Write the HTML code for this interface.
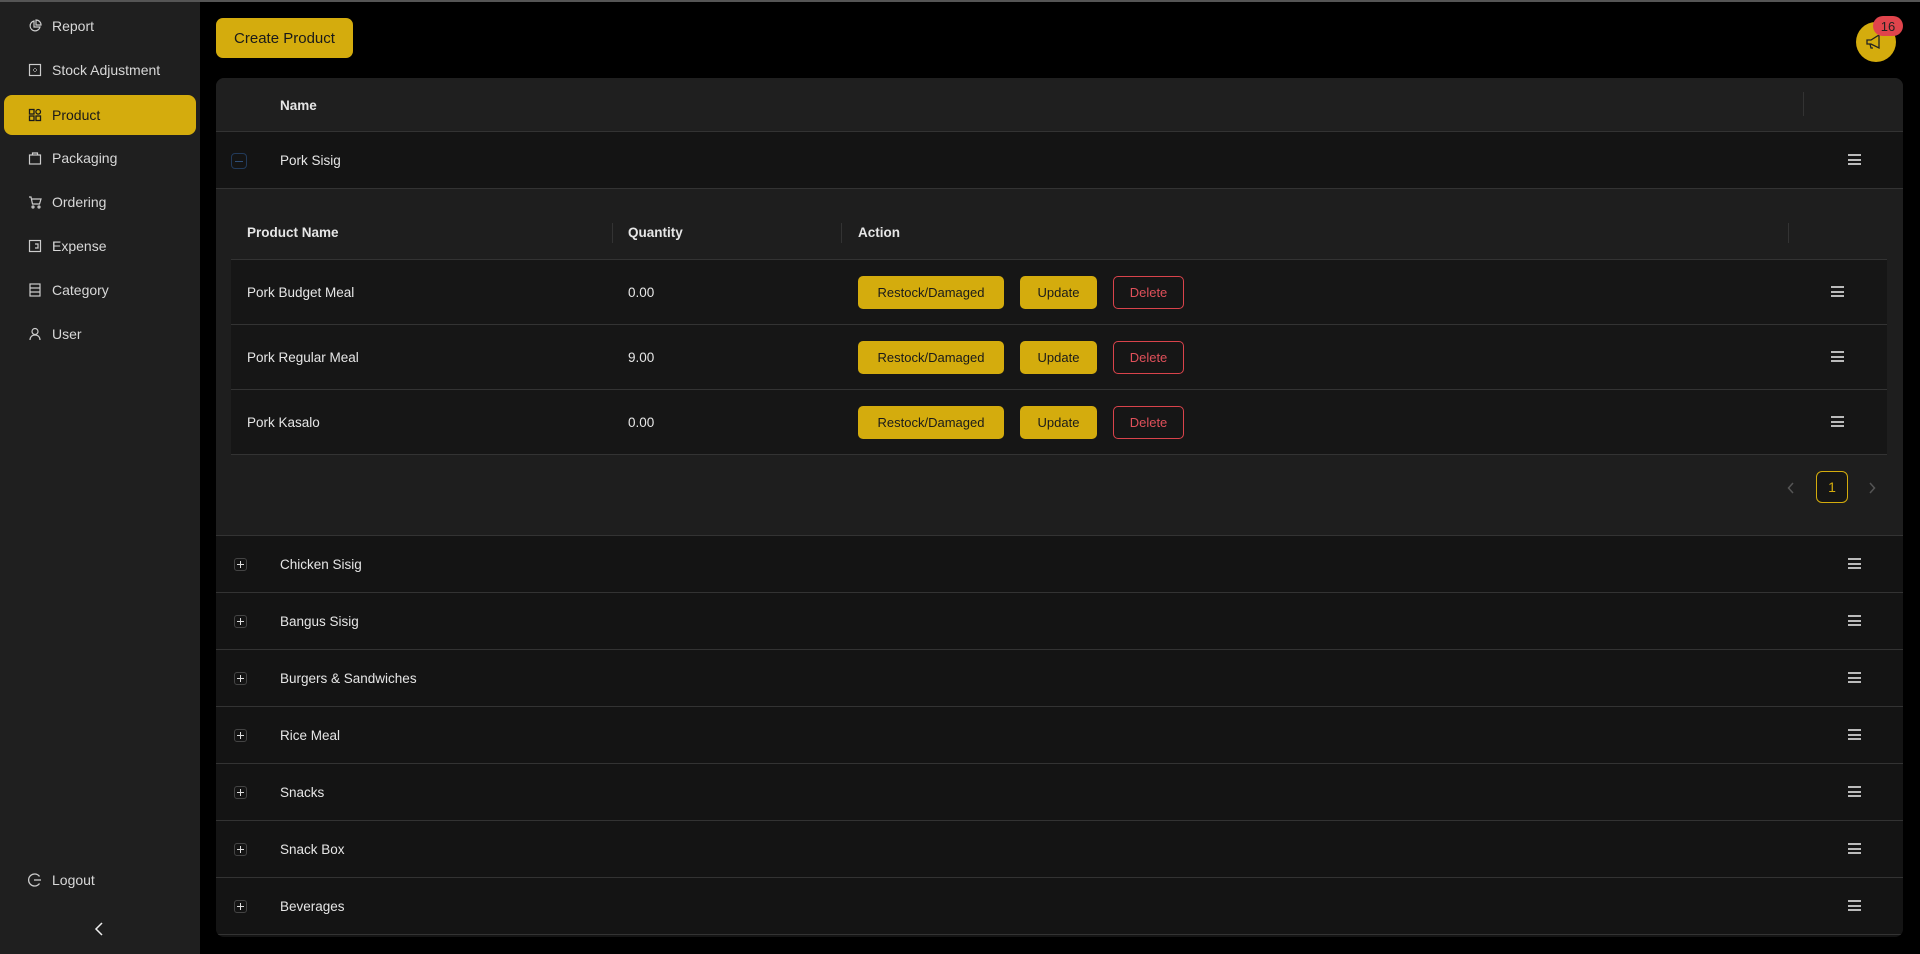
<!DOCTYPE html>
<html><head><meta charset="utf-8"><style>
*{box-sizing:border-box;margin:0;padding:0}
body{width:1920px;height:954px;background:#000;font-family:"Liberation Sans",sans-serif;color:#e6e6e6;position:relative;overflow:hidden}
.topline{position:absolute;left:0;top:0;width:1920px;height:2px;background:#555}
.side{position:absolute;left:0;top:2px;width:200px;height:952px;background:#1f1f1f}
.mi{position:absolute;left:4px;width:192px;height:40px;border-radius:8px;font-size:14px;color:#d8d8d8;display:flex;align-items:center}
.mi svg{position:absolute;left:24px;width:14px;height:14px}
.mi span{position:absolute;left:48px}
.mi.act{background:#d4ac0d;color:#1a1a1a}
.btn-create{position:absolute;left:216px;top:18px;width:137px;height:40px;background:#d4ac0d;border-radius:7px;color:#1a1a1a;font-size:15px;display:flex;align-items:center;justify-content:center}
.card{position:absolute;left:216px;top:78px;width:1687px;height:859px;border-radius:8px;overflow:hidden;background:#141414}
.hdr{position:absolute;left:0;top:0;width:100%;height:54px;background:#1f1f1f;border-bottom:1px solid #333}
.t{position:absolute;font-size:13.5px}
.b{font-weight:bold}
.row{position:absolute;left:0;width:100%;height:57px;border-bottom:1px solid #333;background:#141414}
.row .t{left:64px;top:21px}
.plus{position:absolute;left:18px;top:22px;width:13px;height:13px;border:1px solid #444;border-radius:3px}
.plus:before{content:"";position:absolute;left:2px;top:5px;width:7px;height:1px;background:#ddd}
.plus:after{content:"";position:absolute;left:5px;top:2px;width:1px;height:7px;background:#ddd}
.ham{position:absolute;width:13px;height:11px;border-top:2px solid #bbb;border-bottom:2px solid #bbb}
.ham:after{content:"";position:absolute;left:0;top:2.5px;width:13px;height:2px;background:#bbb}
.exp{position:absolute;left:0;top:111px;width:100%;height:347px;background:#1e1e1e;border-bottom:1px solid #333}
.ihdr{position:absolute;left:15px;top:0;width:1656px;height:71px;border-bottom:1px solid #333}
.sep{position:absolute;top:26px;width:1px;height:20px;background:#333}
.irow{position:absolute;left:15px;width:1656px;height:65px;background:#161616;border-bottom:1px solid #333}
.irow .t{top:25px}
.bt{position:absolute;top:16px;height:33px;border-radius:5px;font-size:13px;display:flex;align-items:center;justify-content:center}
.y{background:#d4ac0d;color:#1a1a1a}
.d{border:1px solid #d9434b;color:#e0505a}
</style></head><body>
<div class="topline"></div>
<div class="side">
 <div class="mi" style="top:4px"><svg viewBox="0 0 14 14" fill="none" stroke="#ccc" stroke-width="1.2"><path d="M6 2a5 5 0 1 0 6 6H6z"/><path d="M8 1v5h5A5 5 0 0 0 8 1z"/></svg><span>Report</span></div>
 <div class="mi" style="top:48px"><svg viewBox="0 0 14 14" fill="none" stroke="#ccc" stroke-width="1.2"><rect x="1.5" y="1.5" width="11" height="11"/><path d="M7 5v1M7 8v1M5 7h1M8 7h1" /></svg><span>Stock Adjustment</span></div>
 <div class="mi act" style="top:93px"><svg viewBox="0 0 14 14" fill="none" stroke="#1a1a1a" stroke-width="1.3"><rect x="1.5" y="1.5" width="4.5" height="4.5"/><rect x="8" y="8" width="4.5" height="4.5"/><rect x="1.5" y="8" width="4.5" height="4.5"/><circle cx="10.2" cy="3.8" r="2.3"/></svg><span>Product</span></div>
 <div class="mi" style="top:136px"><svg viewBox="0 0 14 14" fill="none" stroke="#ccc" stroke-width="1.2"><rect x="1.5" y="4" width="11" height="9"/><path d="M4.5 4V2h5v2"/></svg><span>Packaging</span></div>
 <div class="mi" style="top:180px"><svg viewBox="0 0 14 14" fill="none" stroke="#ccc" stroke-width="1.2"><path d="M1 2h2l1.5 7h7L13 4H4"/><circle cx="5" cy="12" r="1"/><circle cx="11" cy="12" r="1"/></svg><span>Ordering</span></div>
 <div class="mi" style="top:224px"><svg viewBox="0 0 14 14" fill="none" stroke="#ccc" stroke-width="1.2"><rect x="1.5" y="1.5" width="11" height="11"/><path d="M7 5h3v4H7"/></svg><span>Expense</span></div>
 <div class="mi" style="top:268px"><svg viewBox="0 0 14 14" fill="none" stroke="#ccc" stroke-width="1.2"><rect x="2" y="1" width="10" height="12"/><path d="M2 5h10M2 9h10"/></svg><span>Category</span></div>
 <div class="mi" style="top:312px"><svg viewBox="0 0 14 14" fill="none" stroke="#ccc" stroke-width="1.2"><circle cx="7" cy="4.5" r="3"/><path d="M2 13c0-3 2-5 5-5s5 2 5 5"/></svg><span>User</span></div>
 <div class="mi" style="top:858px"><svg viewBox="0 0 14 14" fill="none" stroke="#ccc" stroke-width="1.3"><path d="M11.5 3.5A6 6 0 1 0 11.5 10.5"/><path d="M6 7h7"/></svg><span>Logout</span></div>
 <svg style="position:absolute;left:94px;top:920px" width="10" height="14" viewBox="0 0 10 14" fill="none" stroke="#eee" stroke-width="1.5"><path d="M8 1L2 7l6 6"/></svg>
</div>
<div class="btn-create">Create Product</div>
<div style="position:absolute;left:1856px;top:22px;width:40px;height:40px;border-radius:50%;background:#d4ac0d"><svg style="position:absolute;left:10px;top:12px" width="18" height="16" viewBox="0 0 18 16" fill="none" stroke="#222" stroke-width="1.3"><path d="M1 6h4l8-5v13L5 10H1z"/><path d="M4 10l1 4h2"/></svg></div>
<div style="position:absolute;left:1873px;top:16px;width:30px;height:20px;border-radius:10px;background:#e0444c;color:#222;font-size:13px;display:flex;align-items:center;justify-content:center">16</div>
<div class="card">
 <div class="hdr"><div class="t b" style="left:64px;top:20px">Name</div><div class="sep" style="left:1587px;top:14px;height:24px"></div></div>
 <div class="row" style="top:54px"><div style="position:absolute;left:15px;top:21px;width:16px;height:16px;border:1px solid #223a5a;border-radius:4px"><div style="position:absolute;left:3px;top:7px;width:8px;height:1px;background:#2f4f78"></div></div><div class="t">Pork Sisig</div><div class="ham" style="left:1632px;top:22px"></div></div>
 <div class="exp">
  <div class="ihdr"><div class="t b" style="left:16px;top:36px">Product Name</div><div class="sep" style="left:381px;top:34px"></div><div class="t b" style="left:397px;top:36px">Quantity</div><div class="sep" style="left:610px;top:34px"></div><div class="t b" style="left:627px;top:36px">Action</div><div class="sep" style="left:1557px;top:34px"></div></div>
  <div class="irow" style="top:71px"><div class="t" style="left:16px">Pork Budget Meal</div><div class="t" style="left:397px">0.00</div><div class="bt y" style="left:627px;width:146px">Restock/Damaged</div><div class="bt y" style="left:789px;width:77px">Update</div><div class="bt d" style="left:882px;width:71px">Delete</div><div class="ham" style="left:1600px;top:26px"></div></div>
  <div class="irow" style="top:136px"><div class="t" style="left:16px">Pork Regular Meal</div><div class="t" style="left:397px">9.00</div><div class="bt y" style="left:627px;width:146px">Restock/Damaged</div><div class="bt y" style="left:789px;width:77px">Update</div><div class="bt d" style="left:882px;width:71px">Delete</div><div class="ham" style="left:1600px;top:26px"></div></div>
  <div class="irow" style="top:201px"><div class="t" style="left:16px">Pork Kasalo</div><div class="t" style="left:397px">0.00</div><div class="bt y" style="left:627px;width:146px">Restock/Damaged</div><div class="bt y" style="left:789px;width:77px">Update</div><div class="bt d" style="left:882px;width:71px">Delete</div><div class="ham" style="left:1600px;top:26px"></div></div>
  <svg style="position:absolute;left:1571px;top:293px" width="8" height="12" viewBox="0 0 8 12" fill="none" stroke="#555" stroke-width="1.5"><path d="M6 1L1.5 6 6 11"/></svg>
  <div style="position:absolute;left:1600px;top:282px;width:32px;height:32px;border:1px solid #d4ac0d;border-radius:6px;color:#d4ac0d;font-size:14px;display:flex;align-items:center;justify-content:center;background:#161616">1</div>
  <svg style="position:absolute;left:1652px;top:293px" width="8" height="12" viewBox="0 0 8 12" fill="none" stroke="#555" stroke-width="1.5"><path d="M2 1l4.5 5L2 11"/></svg>
 </div>
 <div class="row" style="top:458px"><div class="plus"></div><div class="t">Chicken Sisig</div><div class="ham" style="left:1632px;top:22px"></div></div>
 <div class="row" style="top:515px"><div class="plus"></div><div class="t">Bangus Sisig</div><div class="ham" style="left:1632px;top:22px"></div></div>
 <div class="row" style="top:572px"><div class="plus"></div><div class="t">Burgers &amp; Sandwiches</div><div class="ham" style="left:1632px;top:22px"></div></div>
 <div class="row" style="top:629px"><div class="plus"></div><div class="t">Rice Meal</div><div class="ham" style="left:1632px;top:22px"></div></div>
 <div class="row" style="top:686px"><div class="plus"></div><div class="t">Snacks</div><div class="ham" style="left:1632px;top:22px"></div></div>
 <div class="row" style="top:743px"><div class="plus"></div><div class="t">Snack Box</div><div class="ham" style="left:1632px;top:22px"></div></div>
 <div class="row" style="top:800px"><div class="plus"></div><div class="t">Beverages</div><div class="ham" style="left:1632px;top:22px"></div></div>
</div>
</body></html>
